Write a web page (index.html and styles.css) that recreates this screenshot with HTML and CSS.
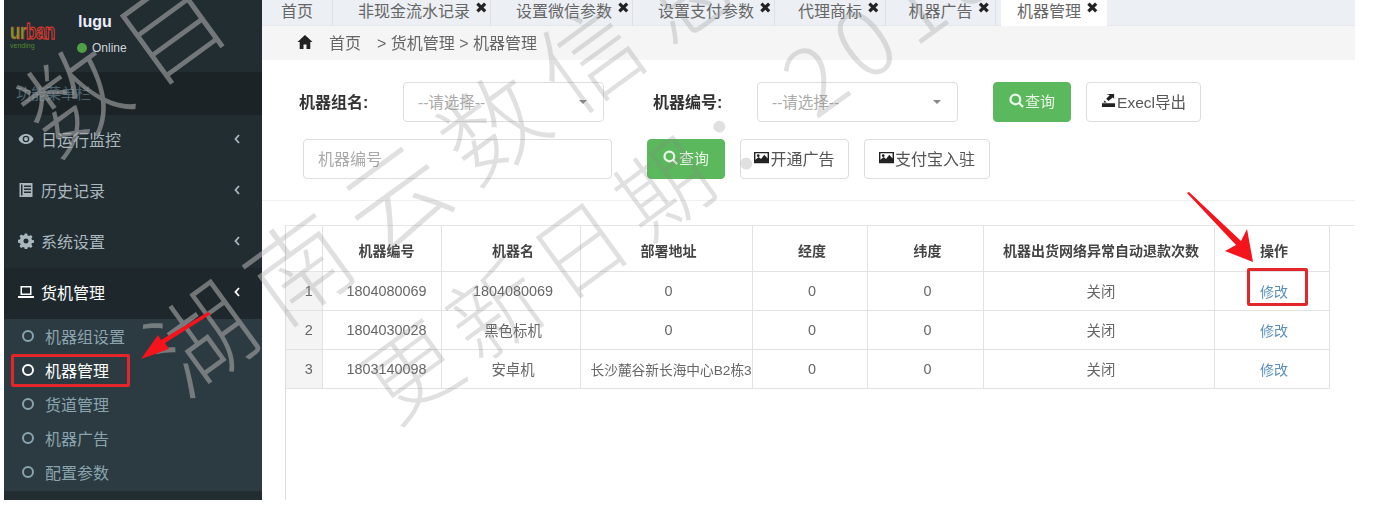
FILE: index.html
```html
<!DOCTYPE html>
<html lang="zh-CN">
<head>
<meta charset="utf-8">
<title>机器管理</title>
<link rel="stylesheet" href="styles.css">
</head>
<body>
<div class="app">
  <aside class="sidebar">
    <div class="user-panel">
      <div class="logo"><div class="logo-word"><span class="lg">ur</span><span class="lr">ban</span></div><div class="logo-sub">vending</div></div>
      <div class="user-info">
        <div class="user-name">lugu</div>
        <div class="user-status"><span class="dot"></span>Online</div>
      </div>
    </div>
    <div class="side-title">功能菜单栏</div>
    <nav>
      <div class="menu-item">
        <svg class="mi" viewBox="0 0 16 16"><path fill="currentColor" d="M8 3C4.500 3 1.600 5.200 0.500 8c1.100 2.800 4 5 7.500 5s6.400-2.200 7.500-5C14.400 5.200 11.500 3 8 3zm0 8.300A3.300 3.300 0 1 1 8 4.700a3.300 3.300 0 0 1 0 6.600zM8 6a2 2 0 1 0 0 4 2 2 0 0 0 0-4z"/></svg>
        <span>日运行监控</span>
        <svg class="chev" viewBox="0 0 6 10"><path d="M5 1 1.500 5 5 9" fill="none" stroke="currentColor" stroke-width="1.800"/></svg>
      </div>
      <div class="menu-item">
        <svg class="mi" viewBox="0 0 16 16"><path fill="currentColor" d="M1.500 1h13v14h-13zM3 2.500v11h1.500v-11zm3 1v1.500h7V3.500zm0 3v1.500h7V6.500zm0 3V11h7V9.500z" fill-rule="evenodd"/></svg>
        <span>历史记录</span>
        <svg class="chev" viewBox="0 0 6 10"><path d="M5 1 1.500 5 5 9" fill="none" stroke="currentColor" stroke-width="1.800"/></svg>
      </div>
      <div class="menu-item">
        <svg class="mi" viewBox="0 0 16 16"><path fill="currentColor" fill-rule="evenodd" d="M6.800 0.500h2.400l.4 2 1.500.6 1.700-1.100 1.700 1.700-1.100 1.700.6 1.500 2 .4v2.400l-2 .4-.6 1.500 1.100 1.700-1.700 1.700-1.700-1.100-1.500.6-.4 2H6.800l-.4-2-1.500-.6-1.700 1.100-1.700-1.700 1.100-1.700-.6-1.500-2-.4V6.800l2-.4.6-1.500L1.500 3.200l1.700-1.700 1.700 1.100 1.500-.6zM8 5.500a2.500 2.500 0 1 0 0 5 2.500 2.500 0 0 0 0-5z"/></svg>
        <span>系统设置</span>
        <svg class="chev" viewBox="0 0 6 10"><path d="M5 1 1.500 5 5 9" fill="none" stroke="currentColor" stroke-width="1.800"/></svg>
      </div>
      <div class="menu-item is-open">
        <svg class="mi" viewBox="0 0 16 16"><path fill="currentColor" fill-rule="evenodd" d="M2.500 2h11v9h-11zM4 3.500v6h8v-6zM0 12h16v2H0z"/></svg>
        <span>货机管理</span>
        <svg class="chev" viewBox="0 0 6 10"><path d="M5 1 1.500 5 5 9" fill="none" stroke="currentColor" stroke-width="1.800"/></svg>
      </div>
      <ul class="submenu">
        <li><i class="ring"></i>机器组设置</li>
        <li class="is-active"><i class="ring"></i>机器管理</li>
        <li><i class="ring"></i>货道管理</li>
        <li><i class="ring"></i>机器广告</li>
        <li><i class="ring"></i>配置参数</li>
      </ul>
    </nav>
    <div class="wm-side">
      <span class="wm w-c">数目</span>
      <span class="wm w-a">湖南</span>
    </div>
  </aside>

  <main class="main">
    <div class="tabs">
      <div class="tab tab-home">首页</div>
      <div class="tab tab-t1">非现金流水记录<b class="x">✖</b></div>
      <div class="tab tab-t2">设置微信参数<b class="x">✖</b></div>
      <div class="tab tab-t2">设置支付参数<b class="x">✖</b></div>
      <div class="tab tab-t3">代理商标<b class="x">✖</b></div>
      <div class="tab tab-t3">机器广告<b class="x">✖</b></div>
      <div class="tab tab-t4 is-current">机器管理<b class="x">✖</b></div>
    </div>
    <div class="crumbs">
      <svg class="home" viewBox="0 0 16 16"><path fill="#222" d="M8 1 0.500 8h2.200v7h3.800v-4.500h3V15h3.800V8h2.200z"/></svg>
      <span class="c-home">首页</span>
      <span>&gt; 货机管理 &gt; 机器管理</span>
    </div>
    <section class="toolbar">
      <div class="row row-one">
        <label class="lbl">机器组名:</label>
        <div class="select">--请选择--<i class="caret"></i></div>
        <label class="lbl lbl-2">机器编号:</label>
        <div class="select">--请选择--<i class="caret"></i></div>
        <button class="btn btn-green btn-q1"><svg class="bi" viewBox="0 0 16 16"><path fill="none" stroke="currentColor" stroke-width="2.400" d="M11 11l4 4M12 6.800A5.200 5.200 0 1 1 1.600 6.800a5.200 5.200 0 0 1 10.400 0z"/></svg>查询</button>
        <button class="btn btn-export"><svg class="bi" viewBox="0 0 16 16"><path fill="#222" d="M6 1h8v5l-1.500-1.300L8 8.500 5.500 6l3.800-3.500zM1 11h14v4H1zM4 8l2 2H2.500z"/></svg>Execl导出</button>
      </div>
      <div class="row row-two">
        <div class="input">机器编号</div>
        <button class="btn btn-green"><svg class="bi" viewBox="0 0 16 16"><path fill="none" stroke="currentColor" stroke-width="2.400" d="M11 11l4 4M12 6.800A5.200 5.200 0 1 1 1.600 6.800a5.200 5.200 0 0 1 10.400 0z"/></svg>查询</button>
        <button class="btn btn-ad"><svg class="bi" viewBox="0 0 16 16"><path fill="#222" fill-rule="evenodd" d="M0 2h16v12H0zM1.500 3.500v7l3.500-3 2.500 2 3.500-4.500 3.500 4V3.500zM4.500 4.500a1.500 1.500 0 1 1 0 3 1.500 1.500 0 0 1 0-3z"/></svg>开通广告</button>
        <button class="btn btn-ali"><svg class="bi" viewBox="0 0 16 16"><path fill="#222" fill-rule="evenodd" d="M0 2h16v12H0zM1.500 3.500v7l3.500-3 2.500 2 3.500-4.500 3.500 4V3.500zM4.500 4.500a1.500 1.500 0 1 1 0 3 1.500 1.500 0 0 1 0-3z"/></svg>支付宝入驻</button>
      </div>
    </section>
    <section class="grid-wrap">
      <table class="grid">
        <colgroup>
          <col class="c0"><col class="c1"><col class="c2"><col class="c3"><col class="c4"><col class="c5"><col class="c6"><col class="c7">
        </colgroup>
        <thead>
          <tr><th></th><th class="first-col">机器编号</th><th>机器名</th><th>部署地址</th><th>经度</th><th>纬度</th><th>机器出货网络异常自动退款次数</th><th>操作</th></tr>
        </thead>
        <tbody>
          <tr><td class="idx">1</td><td class="first-col">1804080069</td><td>1804080069</td><td>0</td><td>0</td><td>0</td><td>关闭</td><td><a class="link">修改</a></td></tr>
          <tr><td class="idx">2</td><td class="first-col">1804030028</td><td>黑色标机</td><td>0</td><td>0</td><td>0</td><td>关闭</td><td><a class="link">修改</a></td></tr>
          <tr><td class="idx">3</td><td class="first-col">1803140098</td><td>安卓机</td><td class="addr">长沙麓谷新长海中心B2栋3</td><td>0</td><td>0</td><td>关闭</td><td><a class="link">修改</a></td></tr>
        </tbody>
      </table>
    </section>
  </main>
</div>

<div class="wm-main">
  <span class="wm w-a">湖南云数信息</span>
  <span class="wm w-b">更新日期：2018</span>
</div>

<div class="mark mark-side"></div>
<div class="mark mark-edit"></div>
<svg class="arrows" viewBox="0 0 1388 506">
  <path fill="#f5141c" d="M211 314 165 343 169 349 141 359 158 335 161 340 208 312z"/>
  <path fill="#f5141c" d="M1187 193 1189 192 1241 241 1247 229 1253 262 1225 251 1236 245z"/>
</svg>
</body>
</html>
```

FILE: styles.css
```css
* { box-sizing: border-box; }
html, body { margin: 0; padding: 0; background: #fff; }
body {
  width: 1388px;
  height: 506px;
  overflow: hidden;
  position: relative;
  font-family: "Liberation Sans", "Noto Sans CJK SC", sans-serif;
  font-size: 14px;
  color: #555;
}
.app {
  display: flex;
  align-items: flex-start;
  padding-left: 4px;
  height: 500px;
  filter: blur(0.55px);
}

/* sidebar */
.sidebar {
  position: relative;
  width: 258px;
  height: 500px;
  background: #222d32;
  color: #b8c7ce;
  overflow: hidden;
  flex: none;
}
.user-panel {
  height: 72px;
  display: flex;
  padding: 12px 0 0 6px;
}
.logo { width: 68px; padding-top: 12px; }
.logo-word {
  width: 46px;
  font-size: 17px;
  line-height: 17px;
  font-weight: 700;
  letter-spacing: -0.5px;
  white-space: nowrap;
  transform: scaleY(1.25);
}
.lg { color: #6aa52f; -webkit-text-stroke: 0.5px #c9382e; }
.lr { color: #222d32; -webkit-text-stroke: 1px #d23a30; }
.logo-sub { font-size: 7px; line-height: 7px; margin-top: 1px; color: #4f8a2a; }
.user-name { color: #eef; font-size: 16px; font-weight: 700; line-height: 20px; }
.user-status { display: flex; align-items: center; margin: 9px 0 0 -1px; font-size: 12px; color: #cfd6d9; }
.dot { width: 10px; height: 10px; border-radius: 50%; background: #4f9f45; margin-right: 5px; }
.side-title {
  height: 43px;
  line-height: 43px;
  background: #1b2327;
  color: #4b646f;
  padding-left: 12px;
  font-size: 15px;
}
.menu-item {
  height: 51px;
  display: flex;
  align-items: center;
  padding: 0 0 4px 14px;
  font-size: 16px;
  color: #aab8be;
}
.menu-item span { margin-left: 7px; }
.mi { width: 16px; height: 16px; flex: none; }
.chev { width: 6px; height: 10px; margin-left: auto; margin-right: 22px; }
.is-open { background: #1e282c; color: #fff; }
.submenu {
  list-style: none;
  margin: 0;
  padding: 0 0 2px;
  height: 172px;
  background: #2c3b41;
  display: flex;
  flex-direction: column;
  justify-content: space-around;
  color: #8aa4af;
}
.submenu li { display: flex; align-items: center; height: 34px; padding-left: 18px; font-size: 16px; }
.ring { width: 12px; height: 12px; border: 2px solid currentColor; border-radius: 50%; margin-right: 11px; }
.is-active { color: #fff; }
.wm-side { position: absolute; left: -4px; top: 0; width: 1388px; height: 506px; pointer-events: none; color: rgba(165,165,165,.62); }

/* main column */
.main { width: 1093px; flex: none; height: 500px; display: flex; flex-direction: column; }
.tabs { height: 26px; display: flex; background: #ecf0f5; border-bottom: 1px solid #e6e8ec; font-size: 16px; color: #666; padding-left: 4px; }
.tab { height: 26px; line-height: 24px; white-space: nowrap; border-right: 1px solid #dde1e6; margin-right: 3px; }
.tab-home { width: 67px; padding-left: 15px; }
.tab-t1 { width: 155px; padding-left: 22px; }
.tab-t2 { width: 139px; padding-left: 22px; }
.tab-t3 { width: 107.500px; padding-left: 20px; }
.tab-t4 { width: 106px; padding-left: 16px; border-right: 0; margin-left: 2px; }
.is-current { background: #fff; }
.x { font-size: 15px; color: #222; margin-left: 5px; position: relative; top: -4px; font-family: "DejaVu Sans", sans-serif; }
.crumbs { height: 34px; background: #f5f5f5; display: flex; align-items: center; padding: 0 0 3px 35px; color: #666; font-size: 16px; }
.home { width: 16px; height: 16px; margin-right: 16px; }
.c-home { margin-right: 16px; }
.toolbar { height: 141px; border-bottom: 1px solid #f0f0f0; flex: none; }
.row { display: flex; align-items: center; height: 40px; }
.row-one { margin-top: 22px; padding-left: 37px; }
.row-two { margin-top: 17px; padding-left: 41px; }
.lbl { width: 70px; font-weight: 700; font-size: 16px; color: #333; margin-right: 34px; padding-bottom: 3px; white-space: nowrap; }
.lbl-2 { margin-left: 49px; }
.select, .input {
  border: 1px solid #ddd;
  border-radius: 4px;
  height: 40px;
  display: flex;
  align-items: center;
  color: #aaa;
  background: #fff;
  padding-bottom: 3px;
}
.select { width: 201px; padding-left: 14px; position: relative; font-size: 15.500px; }
.caret { position: absolute; right: 16px; top: 17px; border: 4px solid transparent; border-top-color: #888; border-bottom: 0; }
.input { width: 309px; padding-left: 14px; font-size: 16px; }
.btn {
  height: 40px;
  border: 1px solid #ddd;
  border-radius: 4px;
  background: #fff;
  color: #555;
  font: inherit;
  font-size: 16px;
  display: flex;
  align-items: center;
  justify-content: center;
  padding: 0 0 3px;
  margin-left: 15px;
  white-space: nowrap;
}
.bi { width: 15px; height: 15px; margin-right: 1px; flex: none; }
.btn-green { width: 78px; background: #5cb85c; border-color: #5cb85c; color: #eaf6ea; margin-left: 35px; font-size: 15px; }
.btn-q1 { margin-left: 35px; }
.btn-export { width: 115px; font-size: 15.500px; }
.btn-ad { width: 109px; }
.btn-ali { width: 126px; }

.grid-wrap {
  margin: 24px 0 0 23px;
  flex: 1;
  border-top: 1px solid #e6e6e6;
  border-left: 1px solid #ddd;
}
.grid { border-collapse: collapse; table-layout: fixed; width: 1043px; }
.c0 { width: 36px; }
.c1 { width: 119px; }
.c2 { width: 139px; }
.c3 { width: 172px; }
.c4 { width: 115px; }
.c5 { width: 116px; }
.c6 { width: 231px; }
.c7 { width: 115px; }
.grid th, .grid td {
  border: 1px solid #e2e2e2;
  text-align: center;
  padding: 0 0 0 5px;
  white-space: nowrap;
  overflow: hidden;
  font-size: 14.400px;
  color: #666;
}
.grid th { height: 45px; font-size: 14px; font-weight: 700; color: #444; border-top: 0; padding-top: 3px; }
.grid td { height: 39px; }
.grid th:first-child, .grid td:first-child { border-left: 0; }
.grid .first-col { padding-left: 10px; }
.grid .idx { background: #f4f4f4; padding-left: 10px; }
.grid .addr { text-align: left; padding-left: 10px; font-size: 13.700px; }
.link { color: #5a8fbe; font-size: 14px; }

/* watermark + annotations */
.wm-main { position: absolute; left: 0; top: 0; width: 1388px; height: 506px; pointer-events: none; color: rgba(130,130,130,.25); clip-path: inset(0 0 0 262px); filter: blur(0.4px); }
.wm {
  position: absolute;
  font-family: "Noto Sans CJK SC", sans-serif;
  font-weight: 300;
  font-size: 102px;
  line-height: 100px;
  letter-spacing: 18px;
  white-space: nowrap;
  transform-origin: 0 50%;
  transform: rotate(-36deg);
}
.w-a { left: 157px; top: 314px; }
.w-b { left: 371px; top: 344px; font-size: 92px; letter-spacing: 12px; }
.w-c { left: 29px; top: 74px; }
.mark { position: absolute; border: 3px solid #e3262b; border-radius: 2px; }
.mark-side { left: 11px; top: 354px; width: 119px; height: 33px; }
.mark-edit { left: 1247px; top: 268px; width: 61px; height: 38px; }
.arrows { position: absolute; left: 0; top: 0; width: 1388px; height: 506px; pointer-events: none; }
```
